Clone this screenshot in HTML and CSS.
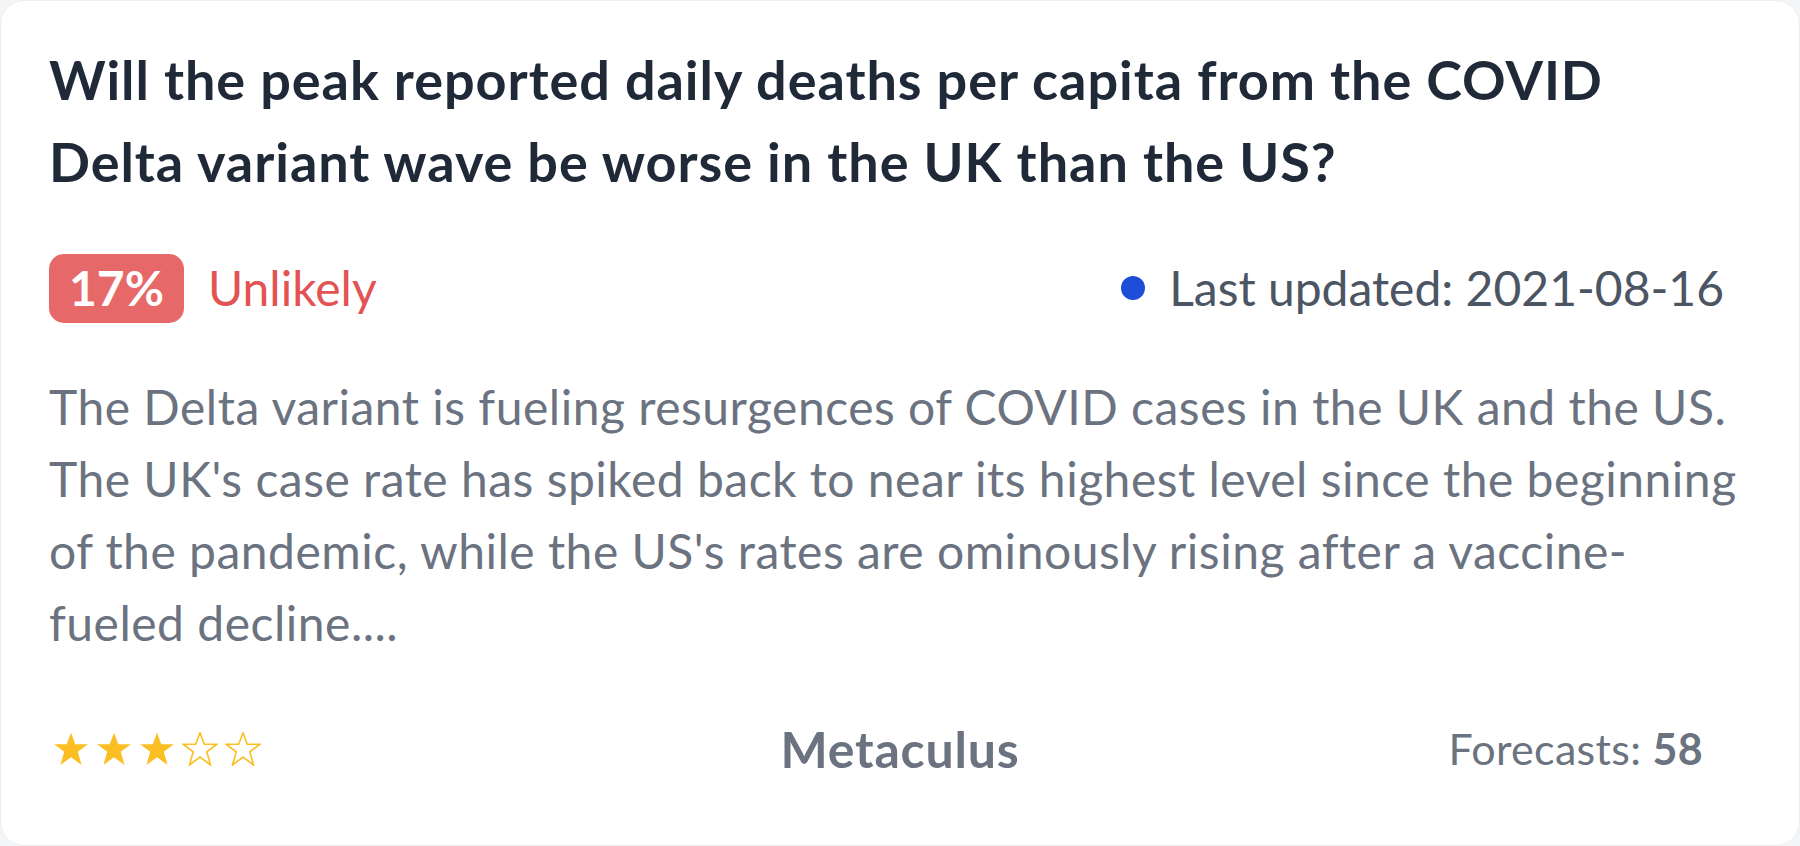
FILE: index.html
```html
<!DOCTYPE html>
<html lang="en">
<head>
<meta charset="utf-8">
<title>Metaculus question</title>
<link rel="stylesheet" href="styles.css">
</head>
<body>
<article class="card">
  <h1 class="title">Will the peak reported daily deaths per capita from the COVID Delta variant wave be worse in the UK than the US?</h1>
  <div class="meta">
    <div class="prob">
      <span class="badge">17%</span>
      <span class="label">Unlikely</span>
    </div>
    <div class="updated">
      <span class="dot"></span>
      <span>Last updated: 2021-08-16</span>
    </div>
  </div>
  <p class="desc">The Delta variant is fueling resurgences of COVID cases in the UK and the US. The UK's case rate has spiked back to near its highest level since the beginning of the pandemic, while the US's rates are ominously rising after a vaccine-fueled decline....</p>
  <footer class="foot">
    <div class="stars">
      <svg class="star" viewBox="0 0 24 23"><polygon class="full" points="12,0.5 14.9,8.3 23.4,8.3 16.6,13.4 19.1,22.3 12,17 4.9,22.3 7.4,13.4 0.6,8.3 9.1,8.3"/></svg>
      <svg class="star" viewBox="0 0 24 23"><polygon class="full" points="12,0.5 14.9,8.3 23.4,8.3 16.6,13.4 19.1,22.3 12,17 4.9,22.3 7.4,13.4 0.6,8.3 9.1,8.3"/></svg>
      <svg class="star" viewBox="0 0 24 23"><polygon class="full" points="12,0.5 14.9,8.3 23.4,8.3 16.6,13.4 19.1,22.3 12,17 4.9,22.3 7.4,13.4 0.6,8.3 9.1,8.3"/></svg>
      <svg class="star" viewBox="0 0 24 23"><polygon class="empty" points="12,0.5 14.9,8.3 23.4,8.3 16.6,13.4 19.1,22.3 12,17 4.9,22.3 7.4,13.4 0.6,8.3 9.1,8.3"/></svg>
      <svg class="star" viewBox="0 0 24 23"><polygon class="empty" points="12,0.5 14.9,8.3 23.4,8.3 16.6,13.4 19.1,22.3 12,17 4.9,22.3 7.4,13.4 0.6,8.3 9.1,8.3"/></svg>
    </div>
    <div class="source">Metaculus</div>
    <div class="count">Forecasts: <b>58</b></div>
  </footer>
</article>
</body>
</html>
```

FILE: styles.css
```css
html, body {
  margin: 0;
  padding: 0;
  background: #f4f5f6;
}
body {
  font-family: Lato, "Noto Sans", sans-serif;
}
.card {
  box-sizing: border-box;
  width: 1800px;
  height: 846px;
  background: #ffffff;
  border: 1px solid #eceef1;
  border-radius: 24px;
  padding: 38px 48px 0 48px;
  display: flex;
  flex-direction: column;
}
.title {
  margin: 0;
  max-width: 1640px;
  font-size: 54px;
  line-height: 82px;
  font-weight: 700;
  letter-spacing: 0.95px;
  color: #1f2937;
}
.meta {
  margin-top: 49px;
  height: 72px;
  display: flex;
  align-items: center;
  justify-content: space-between;
  font-size: 48px;
  line-height: 72px;
}
.prob {
  display: flex;
  align-items: center;
  gap: 24px;
}
.badge {
  box-sizing: border-box;
  height: 69px;
  width: 135px;
  display: flex;
  align-items: center;
  justify-content: center;
  background: #e76868;
  color: #ffffff;
  font-weight: 700;
  border-radius: 15px;
}
.label {
  color: #e25353;
}
.updated {
  display: flex;
  align-items: center;
  gap: 24px;
  color: #4b5563;
  margin-right: 27px;
}
.dot {
  width: 24px;
  height: 24px;
  border-radius: 50%;
  background: #1d4ed8;
}
.desc {
  margin: 47px 0 0 0;
  font-size: 48px;
  line-height: 72px;
  letter-spacing: 0.5px;
  color: #6b7280;
}
.foot {
  margin-top: 54px;
  height: 72px;
  display: grid;
  grid-template-columns: 1fr auto 1fr;
  align-items: center;
  font-size: 48px;
  line-height: 72px;
  color: #6b7280;
}
.stars {
  display: flex;
  gap: 7px;
  padding-left: 4px;
}
.star {
  width: 36px;
  height: 34px;
}
.star .full {
  fill: #fbbf24;
}
.star .empty {
  fill: none;
  stroke: #fbbf24;
  stroke-width: 1.1;
}
.source {
  font-size: 50px;
  font-weight: 700;
  letter-spacing: 0.8px;
}
.count {
  justify-self: end;
  margin-right: 48px;
  font-size: 43px;
  letter-spacing: 0.3px;
}
.count b {
  font-weight: 700;
}
```
